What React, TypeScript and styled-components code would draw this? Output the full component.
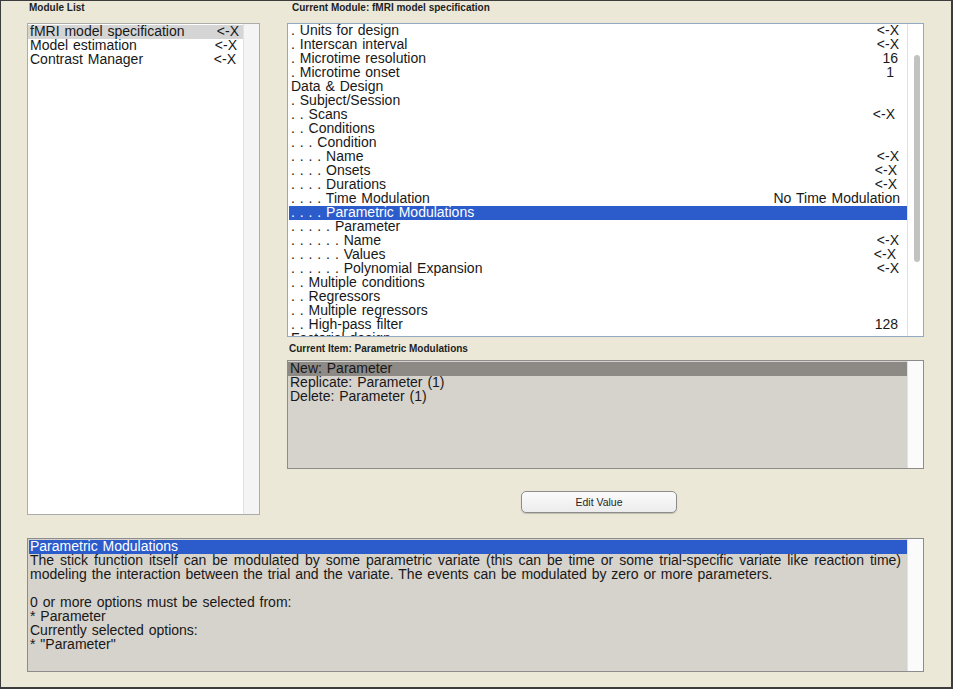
import React from "react";
import styled, { createGlobalStyle } from "styled-components";

const Global = createGlobalStyle`
  html, body { margin: 0; padding: 0; background: #ebe8d8; }
  body { font-family: "Liberation Sans", Arial, Helvetica, sans-serif; color: #181818; }
`;

const Window = styled.div`
  box-sizing: border-box;
  width: 953px;
  height: 689px;
  background: #ebe8d8;
  border-top: 1px solid #3c3c3c;
  border-left: 1px solid #3c3c3c;
  border-right: 2px solid #3c3c3c;
  border-bottom: 2px solid #3c3c3c;
  padding-left: 26px;
  display: flex;
  flex-direction: column;
  overflow: hidden;
`;

const Top = styled.div`
  display: grid;
  grid-template-columns: 233px 637px;
  column-gap: 27px;
  align-items: start;
`;

const Column = styled.div`
  display: flex;
  flex-direction: column;
`;

const Caption = styled.div<{ $h: number; $pt: number; $pl: number }>`
  box-sizing: border-box;
  height: ${(p) => p.$h}px;
  padding: ${(p) => p.$pt}px 0 0 ${(p) => p.$pl}px;
  font-size: 10px;
  line-height: 12px;
  font-weight: bold;
  color: #1e1e1e;
  white-space: nowrap;
`;

const ListBox = styled.div<{ $h: number; $border: string; $bg: string; $pl: number }>`
  box-sizing: border-box;
  height: ${(p) => p.$h}px;
  border: 1px solid ${(p) => p.$border};
  background: ${(p) => p.$bg};
  padding-left: ${(p) => p.$pl}px;
  display: flex;
  overflow: hidden;
`;

const Rows = styled.div<{ $pt: number }>`
  flex: 1;
  min-width: 0;
  padding-top: ${(p) => p.$pt}px;
  overflow: hidden;
`;

type Sel = "none" | "light" | "dark" | "blue";

const selBg: Record<Sel, string> = {
  none: "transparent",
  light: "#d5d5d5",
  dark: "#8d8985",
  blue: "#2c5bcc",
};

const Row = styled.div<{ $sel: Sel }>`
  display: flex;
  justify-content: space-between;
  height: 14px;
  line-height: 13px;
  font-size: 14px;
  word-spacing: 1px;
  padding-left: 2px;
  white-space: pre;
  background: ${(p) => selBg[p.$sel]};
  color: ${(p) => (p.$sel === "blue" ? "#ffffff" : "#181818")};
`;

const Value = styled.span<{ $pr: number }>`
  padding-right: ${(p) => p.$pr}px;
`;

const Track = styled.div<{ $bg: string }>`
  box-sizing: border-box;
  width: 16px;
  flex: none;
  border-left: 1px solid #e2e2e2;
  background: ${(p) => p.$bg};
  display: flex;
  flex-direction: column;
  align-items: center;
`;

const Thumb = styled.div`
  width: 6px;
  height: 207px;
  margin-top: 31px;
  margin-left: 3px;
  border-radius: 3px;
  background: #c2c2c2;
`;

const ButtonRow = styled.div`
  box-sizing: border-box;
  height: 46px;
  padding: 22px 0 0 234px;
  display: flex;
`;

const Button = styled.button`
  box-sizing: border-box;
  width: 156px;
  height: 22px;
  border: 1px solid #8c8c8c;
  border-radius: 5px;
  background: linear-gradient(#fbfbfb, #ececec);
  box-shadow: 0 1px 1px rgba(0, 0, 0, 0.18);
  font-family: "Liberation Sans", Arial, sans-serif;
  font-size: 10.5px;
  color: #262626;
  padding: 0;
`;

const Description = styled(ListBox)`
  margin-top: 23px;
  width: 897px;
`;

const DescTitle = styled.div`
  height: 14px;
  line-height: 13px;
  font-size: 14px;
  word-spacing: 1px;
  background: #2c5bcc;
  color: #ffffff;
  padding-left: 1px;
  white-space: pre;
`;

const DescLine = styled.div<{ $justify?: boolean }>`
  height: 14px;
  line-height: 13px;
  font-size: 14px;
  word-spacing: 1px;
  padding: 0 6px 0 1px;
  text-align: ${(p) => (p.$justify ? "justify" : "left")};
  text-align-last: ${(p) => (p.$justify ? "justify" : "left")};
  overflow: hidden;
`;

type Item = { label: string; value?: string; pr?: number; sel?: Sel };

const modules: Item[] = [
  { label: "fMRI model specification", value: "<-X", pr: 4, sel: "light" },
  { label: "Model estimation", value: "<-X", pr: 6 },
  { label: "Contrast Manager", value: "<-X", pr: 7 },
];

const tree: Item[] = [
  { label: ". Units for design", value: "<-X", pr: 8 },
  { label: ". Interscan interval", value: "<-X", pr: 8 },
  { label: ". Microtime resolution", value: "16", pr: 9 },
  { label: ". Microtime onset", value: "1", pr: 13 },
  { label: "Data & Design" },
  { label: ". Subject/Session" },
  { label: ". . Scans", value: "<-X", pr: 12 },
  { label: ". . Conditions" },
  { label: ". . . Condition" },
  { label: ". . . . Name", value: "<-X", pr: 8 },
  { label: ". . . . Onsets", value: "<-X", pr: 10 },
  { label: ". . . . Durations", value: "<-X", pr: 10 },
  { label: ". . . . Time Modulation", value: "No Time Modulation", pr: 7 },
  { label: ". . . . Parametric Modulations", sel: "blue" },
  { label: ". . . . . Parameter" },
  { label: ". . . . . . Name", value: "<-X", pr: 8 },
  { label: ". . . . . . Values", value: "<-X", pr: 11 },
  { label: ". . . . . . Polynomial Expansion", value: "<-X", pr: 8 },
  { label: ". . Multiple conditions" },
  { label: ". . Regressors" },
  { label: ". . Multiple regressors" },
  { label: ". . High-pass filter", value: "128", pr: 9 },
  { label: "Factorial design" },
];

const actions: Item[] = [
  { label: "New: Parameter", sel: "dark" },
  { label: "Replicate: Parameter (1)" },
  { label: "Delete: Parameter (1)" },
];

const descLines: { text: string; justify?: boolean }[] = [
  {
    text:
      "The stick function itself can be modulated by some parametric variate (this can be time or some trial-specific variate like reaction time)",
    justify: true,
  },
  {
    text:
      "modeling the interaction between the trial and the variate. The events can be modulated by zero or more parameters.",
  },
  { text: "" },
  { text: "0 or more options must be selected from:" },
  { text: "* Parameter" },
  { text: "Currently selected options:" },
  { text: '* "Parameter"' },
];

function ItemRows({ items }: { items: Item[] }) {
  return (
    <>
      {items.map((it, i) => (
        <Row key={i} $sel={it.sel ?? "none"}>
          <span>{it.label}</span>
          {it.value ? <Value $pr={it.pr ?? 8}>{it.value}</Value> : null}
        </Row>
      ))}
    </>
  );
}

export default function App() {
  return (
    <>
      <Global />
      <Window>
        <Top>
          <Column>
            <Caption $h={22} $pt={1} $pl={2}>
              Module List
            </Caption>
            <ListBox $h={492} $border="#acacac" $bg="#ffffff" $pl={0}>
              <Rows $pt={1}>
                <ItemRows items={modules} />
              </Rows>
              <Track $bg="#f4f4f4" />
            </ListBox>
          </Column>
          <Column>
            <Caption $h={22} $pt={1} $pl={5}>
              Current Module: fMRI model specification
            </Caption>
            <ListBox $h={314} $border="#93a8c2" $bg="#ffffff" $pl={1}>
              <Rows $pt={0}>
                <ItemRows items={tree} />
              </Rows>
              <Track $bg="#ffffff">
                <Thumb />
              </Track>
            </ListBox>
            <Caption $h={23} $pt={6} $pl={2}>
              Current Item: Parametric Modulations
            </Caption>
            <ListBox $h={109} $border="#8c8c8c" $bg="#d6d2cc" $pl={0}>
              <Rows $pt={1}>
                <ItemRows items={actions} />
              </Rows>
              <Track $bg="#fbfbfb" />
            </ListBox>
            <ButtonRow>
              <Button>Edit Value</Button>
            </ButtonRow>
          </Column>
        </Top>
        <Description $h={134} $border="#8c8c8c" $bg="#d6d2cc" $pl={1}>
          <Rows $pt={1}>
            <DescTitle>Parametric Modulations</DescTitle>
            {descLines.map((l, i) => (
              <DescLine key={i} $justify={l.justify}>
                {l.text}
              </DescLine>
            ))}
          </Rows>
          <Track $bg="#fbfbfb" />
        </Description>
      </Window>
    </>
  );
}
